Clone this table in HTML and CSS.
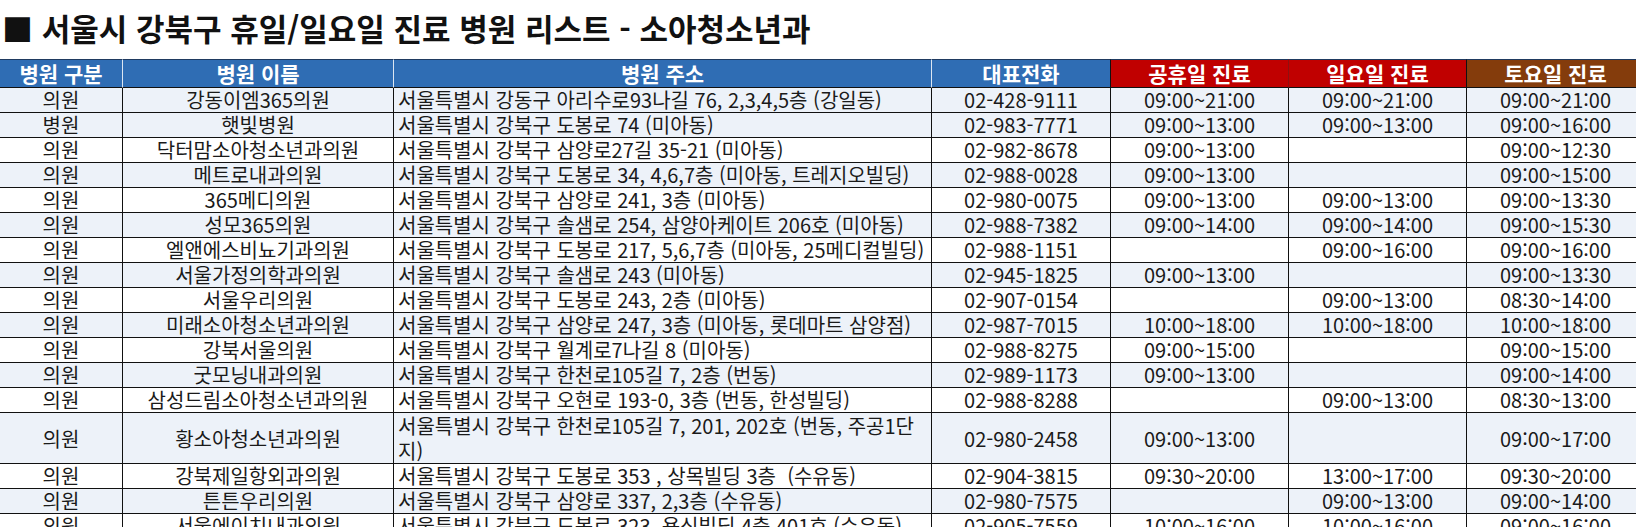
FILE: index.html
```html
<!DOCTYPE html>
<html lang="ko">
<head>
<meta charset="utf-8">
<title>서울시 강북구 휴일/일요일 진료 병원 리스트 - 소아청소년과</title>
<link rel="stylesheet" href="styles.css">
</head>
<body>
<h1 class="title">■ 서울시 강북구 휴일/일요일 진료 병원 리스트 - 소아청소년과</h1>
<table class="list">
<colgroup>
<col class="c-type"><col class="c-name"><col class="c-addr"><col class="c-tel"><col class="c-time"><col class="c-time"><col class="c-time">
</colgroup>
<thead>
<tr>
<th class="h-blue h-light">병원 구분</th>
<th class="h-blue h-light">병원 이름</th>
<th class="h-blue h-light">병원 주소</th>
<th class="h-blue h-dark">대표전화</th>
<th class="h-red h-redline">공휴일 진료</th>
<th class="h-red h-dark">일요일 진료</th>
<th class="h-brown">토요일 진료</th>
</tr>
</thead>
<tbody>
<tr class="tint"><td>의원</td><td>강동이엠365의원</td><td class="addr">서울특별시 강동구 아리수로93나길 76, 2,3,4,5층 (강일동)</td><td>02-428-9111</td><td>09:00~21:00</td><td>09:00~21:00</td><td>09:00~21:00</td></tr>
<tr class="tint"><td>병원</td><td>햇빛병원</td><td class="addr">서울특별시 강북구 도봉로 74 (미아동)</td><td>02-983-7771</td><td>09:00~13:00</td><td>09:00~13:00</td><td>09:00~16:00</td></tr>
<tr><td>의원</td><td>닥터맘소아청소년과의원</td><td class="addr">서울특별시 강북구 삼양로27길 35-21 (미아동)</td><td>02-982-8678</td><td>09:00~13:00</td><td></td><td>09:00~12:30</td></tr>
<tr class="tint"><td>의원</td><td>메트로내과의원</td><td class="addr">서울특별시 강북구 도봉로 34, 4,6,7층 (미아동, 트레지오빌딩)</td><td>02-988-0028</td><td>09:00~13:00</td><td></td><td>09:00~15:00</td></tr>
<tr><td>의원</td><td>365메디의원</td><td class="addr">서울특별시 강북구 삼양로 241, 3층 (미아동)</td><td>02-980-0075</td><td>09:00~13:00</td><td>09:00~13:00</td><td>09:00~13:30</td></tr>
<tr class="tint"><td>의원</td><td>성모365의원</td><td class="addr">서울특별시 강북구 솔샘로 254, 삼양아케이트 206호 (미아동)</td><td>02-988-7382</td><td>09:00~14:00</td><td>09:00~14:00</td><td>09:00~15:30</td></tr>
<tr><td>의원</td><td>엘앤에스비뇨기과의원</td><td class="addr">서울특별시 강북구 도봉로 217, 5,6,7층 (미아동, 25메디컬빌딩)</td><td>02-988-1151</td><td></td><td>09:00~16:00</td><td>09:00~16:00</td></tr>
<tr class="tint"><td>의원</td><td>서울가정의학과의원</td><td class="addr">서울특별시 강북구 솔샘로 243 (미아동)</td><td>02-945-1825</td><td>09:00~13:00</td><td></td><td>09:00~13:30</td></tr>
<tr><td>의원</td><td>서울우리의원</td><td class="addr">서울특별시 강북구 도봉로 243, 2층 (미아동)</td><td>02-907-0154</td><td></td><td>09:00~13:00</td><td>08:30~14:00</td></tr>
<tr class="tint"><td>의원</td><td>미래소아청소년과의원</td><td class="addr">서울특별시 강북구 삼양로 247, 3층 (미아동, 롯데마트 삼양점)</td><td>02-987-7015</td><td>10:00~18:00</td><td>10:00~18:00</td><td>10:00~18:00</td></tr>
<tr><td>의원</td><td>강북서울의원</td><td class="addr">서울특별시 강북구 월계로7나길 8 (미아동)</td><td>02-988-8275</td><td>09:00~15:00</td><td></td><td>09:00~15:00</td></tr>
<tr class="tint"><td>의원</td><td>굿모닝내과의원</td><td class="addr">서울특별시 강북구 한천로105길 7, 2층 (번동)</td><td>02-989-1173</td><td>09:00~13:00</td><td></td><td>09:00~14:00</td></tr>
<tr><td>의원</td><td>삼성드림소아청소년과의원</td><td class="addr">서울특별시 강북구 오현로 193-0, 3층 (번동, 한성빌딩)</td><td>02-988-8288</td><td></td><td>09:00~13:00</td><td>08:30~13:00</td></tr>
<tr class="tint double"><td>의원</td><td>황소아청소년과의원</td><td class="addr">서울특별시 강북구 한천로105길 7, 201, 202호 (번동, 주공1단<br>지)</td><td>02-980-2458</td><td>09:00~13:00</td><td></td><td>09:00~17:00</td></tr>
<tr><td>의원</td><td>강북제일항외과의원</td><td class="addr">서울특별시 강북구 도봉로 353 , 상목빌딩 3층 &nbsp;(수유동)</td><td>02-904-3815</td><td>09:30~20:00</td><td>13:00~17:00</td><td>09:30~20:00</td></tr>
<tr class="tint"><td>의원</td><td>튼튼우리의원</td><td class="addr">서울특별시 강북구 삼양로 337, 2,3층 (수유동)</td><td>02-980-7575</td><td></td><td>09:00~13:00</td><td>09:00~14:00</td></tr>
<tr><td>의원</td><td>서울에이치내과의원</td><td class="addr">서울특별시 강북구 도봉로 323, 용신빌딩 4층 401호 (수유동)</td><td>02-905-7559</td><td>10:00~16:00</td><td>10:00~16:00</td><td>09:00~16:00</td></tr>
</tbody>
</table>
</body>
</html>
```
FILE: styles.css
```css
html, body {
  margin: 0;
  padding: 0;
  background: #ffffff;
  overflow: hidden;
}
body {
  font-family: "Noto Sans CJK KR", "Noto Sans", sans-serif;
  color: #1a1a1a;
}
.title {
  margin: 0;
  height: 59px;
  line-height: 56px;
  padding-left: 2px;
  font-size: 31px;
  font-weight: 700;
  color: #111111;
  white-space: nowrap;
}
.list {
  border-collapse: separate;
  border-spacing: 0;
  table-layout: fixed;
  width: 1644px;
}
.c-type { width: 123px; }
.c-name { width: 271px; }
.c-addr { width: 538px; }
.c-tel { width: 179px; }
.c-time { width: 178px; }
.list th {
  height: 27px;
  padding: 0;
  font-size: 21px;
  font-weight: 700;
  color: #ffffff;
  line-height: 27px;
  text-align: center;
  border-top: 1px solid #1f3a60;
  border-bottom: 1px solid #111111;
  border-right: 1px solid #111111;
  white-space: nowrap;
}
.h-blue { background: #2f6db4; }
.h-red { background: #c00000; }
.h-brown { background: #843c0c; }
.h-light { border-right-color: #dce6f2 !important; }
.h-redline { border-right-color: #8e1010 !important; }
.list td {
  height: 24px;
  padding: 0;
  font-size: 20px;
  line-height: 24px;
  text-align: center;
  border-bottom: 1px solid #111111;
  border-right: 1px solid #111111;
  white-space: nowrap;
  vertical-align: middle;
}
.list td.addr {
  text-align: left;
  padding-left: 4px;
}
.list tr.double td {
  height: 50px;
  line-height: 25px;
}
.list tr.tint td {
  background: #edf2f9;
}
```
